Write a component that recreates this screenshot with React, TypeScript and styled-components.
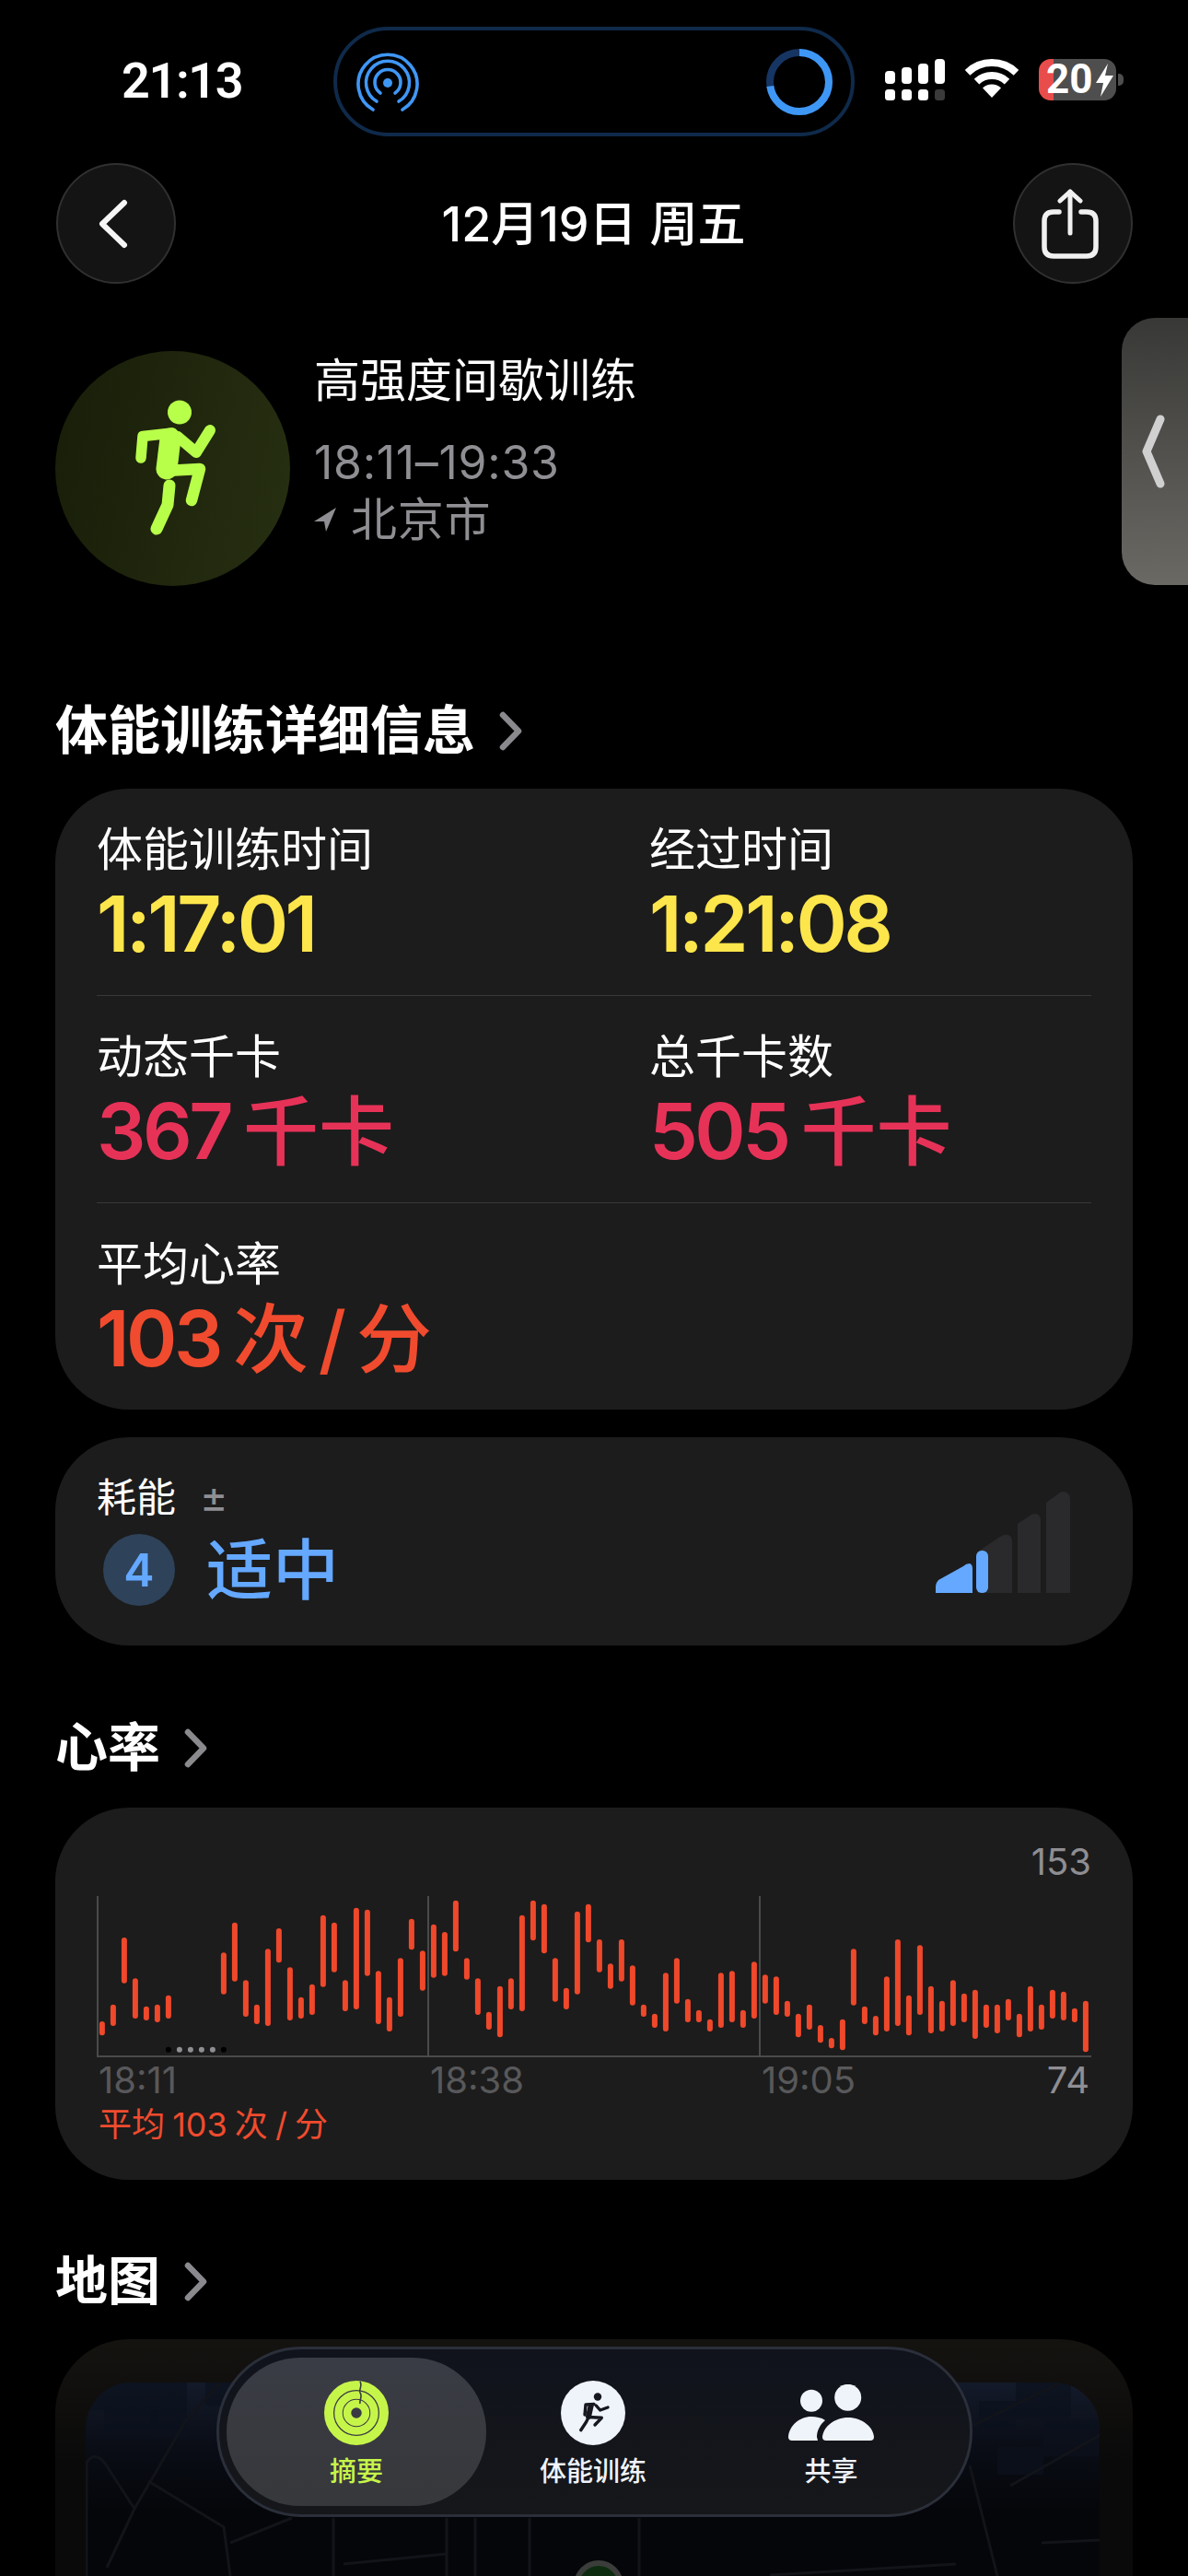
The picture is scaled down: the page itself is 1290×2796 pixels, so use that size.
import styled, { createGlobalStyle } from 'styled-components';

const FONT = '"Inter", "Noto Sans CJK SC", sans-serif';

// [top, bottom] of each heart rate bar, in chart pixels
const HEART_BARS: [number, number][] = [
  [582, 628], [527, 597], [309, 458], [442, 573], [533, 579], [527, 585], [497, 573], [0, 0], [0, 0], [0, 0], [0, 0],
  [358, 494], [260, 452], [448, 567], [527, 591], [346, 597], [279, 391], [406, 579], [503, 573], [461, 561],
  [236, 470], [260, 422], [448, 549], [212, 543], [218, 434], [418, 591], [503, 615], [376, 567], [248, 349],
  [352, 482], [266, 440], [291, 434], [188, 355], [376, 446], [442, 561], [551, 609], [467, 634], [442, 543],
  [236, 549], [188, 319], [200, 361], [376, 518], [473, 543], [224, 494], [200, 325], [315, 422], [394, 476],
  [315, 452], [400, 530], [527, 567], [557, 603], [424, 615], [376, 524], [509, 585], [545, 585], [575, 615],
  [424, 603], [418, 585], [545, 603], [388, 573], [430, 524], [436, 561], [515, 567], [557, 634], [527, 609],
  [594, 652], [636, 670], [575, 676], [346, 530], [533, 591], [564, 628], [436, 615], [315, 597], [497, 628],
  [334, 561], [467, 621], [515, 615], [448, 597], [491, 585], [479, 639], [527, 603], [527, 621], [509, 579],
  [557, 634], [467, 615], [527, 609], [479, 573], [485, 579], [539, 585], [515, 682],
];

const GlobalStyle = createGlobalStyle`
  html, body {
    margin: 0;
    background: #000;
  }
`;

const Page = styled.div`
  position: relative;
  width: 1290px;
  height: 2796px;
  overflow: hidden;
  background: #000;
  color: #fff;
  font-family: ${FONT};
`;

const StatusBar = styled.div`
  display: flex;
  height: 177px;
  box-sizing: border-box;
  padding: 29px 70px 0 132px;
  align-items: flex-start;
`;

const Clock = styled.div`
  width: 230px;
  height: 119px;
  font-family: "Roboto", sans-serif;
  font-size: 54px;
  font-weight: 600;
  line-height: 119px;
  letter-spacing: -1.4px;
  margin-top: -1px;
`;

const Island = styled.div`
  display: flex;
  width: 566px;
  height: 119px;
  box-sizing: border-box;
  padding: 0 20px 0 21px;
  align-items: center;
  justify-content: space-between;
  border: 4px solid #0f2a4a;
  border-radius: 60px;
`;

const StatusIcons = styled.div`
  display: flex;
  margin: 35px 0 0 33px;
  gap: 22px;
  align-items: flex-start;
`;

const Battery = styled.div`
  position: relative;
  display: flex;
  width: 84px;
  height: 45px;
  box-sizing: border-box;
  padding-left: 8px;
  align-items: center;
  gap: 3px;
  border-radius: 13px;
  background: linear-gradient(90deg, #e84d4b 16px, #4e4e4e 16px);
  font-family: "Roboto", sans-serif;
  font-size: 44px;
  font-weight: 700;
  line-height: 45px;

  &::after {
    content: '';
    position: absolute;
    right: -8px;
    top: 16px;
    width: 6px;
    height: 13px;
    border-radius: 0 5px 5px 0;
    background: #4e4e4e;
  }
`;

const NavBar = styled.div`
  position: relative;
  display: flex;
  padding: 0 60px 0 61px;
  align-items: center;
  justify-content: space-between;
`;

const RoundButton = styled.button`
  display: flex;
  width: 130px;
  height: 131px;
  padding: 0 6px 0 0;
  align-items: center;
  justify-content: center;
  border: 2px solid #303030;
  border-radius: 50%;
  background: #141414;
`;

const NavTitle = styled.div`
  padding-top: 3px;
  font-size: 52px;
  font-weight: 500;
  line-height: 60px;
  margin-right: 2px;
`;

const Hero = styled.div`
  display: flex;
  margin: 73px 0 0 60px;
  gap: 26px;
`;

const HeroBadge = styled.div`
  display: flex;
  width: 255px;
  height: 255px;
  align-items: center;
  justify-content: center;
  border-radius: 50%;
  background: linear-gradient(100deg, #181e08, #272f12);
`;

const HeroText = styled.div`
  padding-top: 2px;
`;

const HeroTitle = styled.div`
  margin-bottom: 28px;
  font-size: 50px;
  line-height: 60px;
`;

const HeroMeta = styled.div`
  display: flex;
  height: 62px;
  gap: 16px;
  align-items: center;
  color: #8e8e93;
  font-size: 50px;
  letter-spacing: 0.7px;
  line-height: 62px;
`;

const SectionTitle = styled.div<{ $top: number; $bottom?: number }>`
  display: flex;
  height: 72px;
  margin: ${(p) => p.$top}px 0 ${(p) => p.$bottom ?? 28}px 60px;
  gap: 26px;
  align-items: center;
  font-size: 57px;
  font-weight: 700;
  line-height: 72px;
`;

const Card = styled.div`
  margin: 0 60px;
  padding: 0 45px;
  border-radius: 80px;
  background: #1c1c1c;
`;

const MetricRow = styled.div<{ $divided?: boolean }>`
  display: grid;
  grid-template-columns: 600px 1fr;
  box-sizing: border-box;
  height: ${(p) => (p.$divided ? 225 : 224)}px;
  padding-top: 36px;
  border-bottom: ${(p) => (p.$divided ? '1px solid #38383a' : 'none')};
`;

const MetricLabel = styled.div`
  font-size: 50px;
  line-height: 60px;
  margin-bottom: 6px;
`;

const MetricValue = styled.div<{ $color: string }>`
  color: ${(p) => p.$color};
  font-size: 84px;
  font-weight: 560;
  line-height: 90px;
  letter-spacing: -3.5px;
  white-space: nowrap;
`;

const Unit = styled.span`
  margin-left: 14px;
  font-size: 82px;
  font-weight: 500;
  letter-spacing: 0;
  word-spacing: -11px;
`;

const EffortCard = styled(Card)`
  position: relative;
  height: 226px;
  margin-top: 30px;
  box-sizing: border-box;
  padding-top: 39px;
  display: flex;
  justify-content: space-between;
`;

const EffortLabel = styled.div`
  display: flex;
  gap: 26px;
  align-items: center;
  font-size: 43px;
  line-height: 52px;
`;

const PlusMinus = styled.span`
  margin-top: -2px;
  color: #8e8e93;
  font-size: 46px;
`;

const EffortRow = styled.div`
  display: flex;
  margin: 14px 0 0 7px;
  gap: 34px;
  align-items: center;
`;

const EffortBadge = styled.div`
  display: flex;
  width: 78px;
  height: 78px;
  align-items: center;
  justify-content: center;
  border-radius: 50%;
  background: #2e4259;
  color: #64a8ff;
  font-size: 50px;
  font-weight: 600;
`;

const EffortText = styled.div`
  color: #64a8ff;
  font-size: 72px;
  font-weight: 500;
  line-height: 78px;
`;

const EffortBars = styled.div`
  margin: 19px 23px 0 0;
`;

const HeartCard = styled(Card)`
  padding-top: 34px;
  padding-bottom: 38px;
`;

const ChartMax = styled.div`
  color: #8e8e93;
  font-size: 40px;
  line-height: 50px;
  text-align: right;
`;

const Chart = styled.svg`
  display: block;
  width: 1080px;
  height: 190px;
`;

const AxisRow = styled.div`
  display: grid;
  grid-template-columns: 360px 360px 1fr auto;
  padding: 0 2px;
  line-height: 44px;
  font-size: 40px;
  color: #58585a;
`;

const AxisMin = styled.span`
  color: #8e8e93;
`;

const AverageText = styled.div`
  margin: 4px 0 0 2px;
  color: #f04b2e;
  font-size: 36px;
  line-height: 44px;
  word-spacing: -2px;
`;

const MapCard = styled(Card)`
  height: 400px;
  padding: 47px 36px 0 33px;
  background: linear-gradient(180deg, #151310, #0a0a0a 30%);
`;

const MapView = styled.div`
  height: 400px;
  overflow: hidden;
  border-radius: 50px 50px 0 0;
  background: linear-gradient(180deg, #131a29 0, #0a0d16 70px, #05060a 140px);
`;

const SideHandle = styled.div`
  position: absolute;
  top: 345px;
  right: 0;
  display: flex;
  width: 72px;
  height: 290px;
  box-sizing: border-box;
  padding-left: 21px;
  align-items: center;
  border-radius: 36px 0 0 36px;
  background: linear-gradient(180deg, #383836, #6b6964);
`;

const TabBar = styled.div`
  position: absolute;
  top: 2547px;
  left: 235px;
  display: grid;
  grid-template-columns: 282px 232px 1fr;
  width: 821px;
  height: 185px;
  box-sizing: border-box;
  padding: 9px 8px;
  border: 3px solid #2a2f3a;
  border-radius: 92px;
  background: linear-gradient(180deg, #10131c, #16171a);
`;

const Tab = styled.div<{ $active?: boolean }>`
  display: flex;
  padding-top: 25px;
  flex-direction: column;
  align-items: center;
  gap: 11px;
  border-radius: 80px;
  background: ${(p) => (p.$active ? 'linear-gradient(180deg, #3a3c45, #37383b)' : 'transparent')};
  color: ${(p) => (p.$active ? '#c6f54a' : '#eff3fa')};
  font-size: 29px;
  font-weight: 500;
  line-height: 36px;
`;

const TabIcon = styled.svg`
  display: block;
  width: 70px;
  height: 70px;
`;

const PeopleGlyph = styled.svg`
  display: block;
  width: 93px;
  height: 62px;
  margin: 4px 0;
`;

function ChevronRight() {
  return (
    <svg width="25" height="43" viewBox="0 0 25 43" fill="none" stroke="#8a8a8e" strokeWidth="6.5" strokeLinecap="round" strokeLinejoin="round">
      <path d="M4 4 L21 21.5 L4 39" />
    </svg>
  );
}

function Arcs() {
  const arc = (dx: number, dy: number, r: number) => `M${34 - dx} ${35 + dy} A${r} ${r} 0 1 1 ${34 + dx} ${35 + dy}`;
  return (
    <svg width="68" height="68" viewBox="0 0 68 68" fill="none" stroke="#3f97f5" strokeWidth="3.6" strokeLinecap="round">
      <path d={arc(16, 29, 32)} />
      <path d={arc(12, 20, 23.5)} />
      <path d={arc(8, 11, 14)} />
      <circle cx="34" cy="35" r="5" fill="#3f97f5" stroke="none" />
    </svg>
  );
}

function ProgressRing() {
  return (
    <svg width="72" height="72" viewBox="0 0 72 72" fill="none" strokeWidth="8" style={{ transform: 'rotate(-90deg)' }}>
      <circle cx="36" cy="36" r="32" stroke="#163563" />
      <circle cx="36" cy="36" r="32" stroke="#3f97f5" strokeDasharray="146 201" />
    </svg>
  );
}

function SignalBars() {
  const tops = [13, 9, 5, 0];
  return (
    <svg width="65" height="45" viewBox="0 0 65 45" fill="#fff">
      {tops.map((t, i) => (
        <rect key={`t${t}`} x={i * 18} y={t} width="11" height={27 - t} rx="4" />
      ))}
      {tops.map((t, i) => (
        <rect key={`b${t}`} x={i * 18} y="33" width="11" height="12" rx="3.5" fill={i === 3 ? '#3a3a3a' : '#fff'} />
      ))}
    </svg>
  );
}

function Wifi() {
  return (
    <svg width="58" height="42" viewBox="0 0 58 42" fill="none" stroke="#fff" strokeWidth="8">
      <path d="M2.5 14.8 A38 38 0 0 1 55.5 14.8" />
      <path d="M12.5 24.6 A24 24 0 0 1 45.5 24.6" />
      <path d="M29 42 L19 31.5 A14.5 14.5 0 0 1 39 31.5 Z" fill="#fff" stroke="none" />
    </svg>
  );
}

function Bolt() {
  return (
    <svg width="19" height="36" viewBox="0 0 19 36" fill="#fff">
      <path d="M13 0 L0 21 H8 L5 36 L19 13 H10 Z" />
    </svg>
  );
}

function HeroRunner() {
  return (
    <svg width="255" height="255" viewBox="0 0 255 255" fill="none" stroke="#b8ff4a" strokeLinecap="round" strokeLinejoin="round">
      <circle cx="135" cy="66.5" r="13" fill="#b8ff4a" stroke="none" />
      <path d="M93 116 L95 92.5 L127 89" strokeWidth="11.5" />
      <path d="M125 95 L121 128" strokeWidth="23" />
      <path d="M133 93 L153 110 L168 86" strokeWidth="12" />
      <path d="M120 130 L157 128 L148 162" strokeWidth="12.5" />
      <path d="M124 146 L122 167 L110 193" strokeWidth="13" />
    </svg>
  );
}

function TabRunner() {
  return (
    <TabIcon viewBox="0 0 70 70" fill="none" stroke="#17181f" strokeWidth="3.4" strokeLinecap="round" strokeLinejoin="round">
      <circle cx="35" cy="35" r="35" fill="#eff3fa" stroke="none" />
      <circle cx="40" cy="17.5" r="4.2" fill="#17181f" stroke="none" />
      <path d="M32.7 27 L30 39" strokeWidth="6" />
      <path d="M26 37 L27 26 L36 25.5" />
      <path d="M38.3 27 L42.7 32 L51 29" />
      <path d="M30 39.5 L44.3 40.3 L37 48" />
      <path d="M29 42 L27.3 45.3 L21.7 53.7" />
    </TabIcon>
  );
}

function RingsIcon() {
  return (
    <TabIcon viewBox="0 0 70 70" fill="none">
      <circle cx="35" cy="35" r="30" stroke="#c6f54a" strokeWidth="10" />
      <circle cx="35" cy="35" r="19.5" stroke="#c6f54a" strokeWidth="8.5" />
      <circle cx="35" cy="35" r="10" stroke="#c6f54a" strokeWidth="8.5" />
      <path d="M39 1 C42 6 37 10 39 13 C42 17 38 21 39 25" stroke="#383a40" strokeWidth="1.6" />
    </TabIcon>
  );
}

function PeopleIcon() {
  return (
    <PeopleGlyph viewBox="0 0 93 62" fill="#eff3fa">
      <circle cx="25" cy="17.7" r="12" />
      <circle cx="64.7" cy="14.3" r="14.5" />
      <path d="M41 61 Q37 61 37 57 C38 46 50 36 65 36 C80 36 92 46 93 57 Q93 61 89 61 Z" />
      <path d="M4 61 Q0 61 0 57 C1 45 12 35 25 35 C30 35 36 36 40 39 C35 43 31 50 31 57 L32 61 Z" />
    </PeopleGlyph>
  );
}

function MapDrawing() {
  const roads = [
    'M1 210 L1 87 Q12 70 27 97 L53 137 L23 201',
    'M53 137 L109 41 L146 1',
    'M68 107 L150 157 L157 210',
    'M157 174 L224 147',
    'M963 47 L1057 1',
    'M1004 112 L1101 57',
    'M960 90 L990 210',
    'M743 209 L945 197',
    'M1038 174 L1101 171',
    'M280 197 L392 186',
    'M269 147 V210 M392 147 V210 M423 147 V210 M482 147 V210 M601 147 V210',
  ];
  const blocks = [
    [0, 0, 70, 30], [70, 0, 40, 60], [20, 30, 60, 25], [1010, 0, 60, 40], [1040, 40, 60, 40], [970, 20, 40, 30],
    [130, 0, 40, 25], [990, 70, 50, 30],
  ];
  return (
    <svg width="1101" height="400" viewBox="0 0 1101 400" fill="none">
      {blocks.map(([x, y, w, h]) => (
        <rect key={`${x}-${y}`} x={x} y={y} width={w} height={h} fill="#0c111d" opacity="0.7" />
      ))}
      {roads.map((d) => (
        <path key={d} d={d} stroke="#12141a" strokeWidth="3" />
      ))}
      <circle cx="557" cy="220" r="24" fill="#0d2c0f" stroke="#3a3d3a" strokeWidth="6" />
    </svg>
  );
}

export default function App() {
  return (
    <Page>
      <GlobalStyle />
      <StatusBar>
        <Clock>21:13</Clock>
        <Island>
          <Arcs />
          <ProgressRing />
        </Island>
        <StatusIcons>
          <SignalBars />
          <Wifi />
          <Battery>
            20
            <Bolt />
          </Battery>
        </StatusIcons>
      </StatusBar>

      <NavBar>
        <RoundButton aria-label="返回">
          <svg width="32" height="54" viewBox="0 0 32 54" fill="none" stroke="#f5f5f5" strokeWidth="6" strokeLinecap="round" strokeLinejoin="round">
            <path d="M28 4 L4 27 L28 50" />
          </svg>
        </RoundButton>
        <NavTitle>12月19日 周五</NavTitle>
        <RoundButton aria-label="分享">
          <svg width="62" height="76" viewBox="0 0 62 76" fill="none" stroke="#f0f0f0" strokeWidth="5" strokeLinecap="round" strokeLinejoin="round">
            <path d="M31 3 V48" />
            <path d="M20 13 L31 3 L42 13" />
            <path d="M19 25 H13 Q3 25 3 35 V63 Q3 73 13 73 H49 Q59 73 59 63 V35 Q59 25 49 25 H43" strokeWidth="5.5" />
          </svg>
        </RoundButton>
      </NavBar>

      <Hero>
        <HeroBadge>
          <HeroRunner />
        </HeroBadge>
        <HeroText>
          <HeroTitle>高强度间歇训练</HeroTitle>
          <HeroMeta>18:11–19:33</HeroMeta>
          <HeroMeta>
            <svg width="24" height="26" viewBox="0 0 24 26" fill="#8e8e93">
              <path d="M24 0 L0 15 L11 15 L13 26 Z" />
            </svg>
            北京市
          </HeroMeta>
        </HeroText>
      </Hero>

      <SectionTitle $top={121} $bottom={27}>
        体能训练详细信息
        <ChevronRight />
      </SectionTitle>
      <Card>
        <MetricRow $divided>
          <div>
            <MetricLabel>体能训练时间</MetricLabel>
            <MetricValue $color="#fde64b">1:17:01</MetricValue>
          </div>
          <div>
            <MetricLabel>经过时间</MetricLabel>
            <MetricValue $color="#fde64b">1:21:08</MetricValue>
          </div>
        </MetricRow>
        <MetricRow $divided>
          <div>
            <MetricLabel>动态千卡</MetricLabel>
            <MetricValue $color="#e73258">
              367
              <Unit>千卡</Unit>
            </MetricValue>
          </div>
          <div>
            <MetricLabel>总千卡数</MetricLabel>
            <MetricValue $color="#e73258">
              505
              <Unit>千卡</Unit>
            </MetricValue>
          </div>
        </MetricRow>
        <MetricRow>
          <div>
            <MetricLabel>平均心率</MetricLabel>
            <MetricValue $color="#f04b2e">
              103
              <Unit>次 / 分</Unit>
            </MetricValue>
          </div>
        </MetricRow>
      </Card>

      <EffortCard>
        <div>
          <EffortLabel>
            耗能
            <PlusMinus>±</PlusMinus>
          </EffortLabel>
          <EffortRow>
            <EffortBadge>4</EffortBadge>
            <EffortText>适中</EffortText>
          </EffortRow>
        </div>
        <EffortBars>
          <svg width="146" height="111" viewBox="0 0 146 111">
            <g fill="#2a2a2c">
              <path d="M46 111 V66 L70 50 Q75 47 79 48 Q83 50 83 55 V111 Z" />
              <path d="M89 111 V36 L104 26 Q108 24 111 26 Q114 28 114 32 V111 Z" />
              <path d="M120 111 V13 L135 2 Q139 0 142 2 Q146 4 146 9 V111 Z" />
            </g>
            <g fill="#64a8ff">
              <path d="M0 111 V104 Q0 100 3 97 L30 82 Q33 79 37 79 Q40 80 40 85 V111 Z" />
              <rect x="44" y="65" width="13" height="46" rx="6" />
            </g>
          </svg>
        </EffortBars>
      </EffortCard>

      <SectionTitle $top={75} $bottom={29}>
        心率
        <ChevronRight />
      </SectionTitle>
      <HeartCard>
        <ChartMax>153</ChartMax>
        <Chart viewBox="0 0 1080 190" fill="none">
          <path d="M1 12 V186 H1080 M360 12 V186 M720 12 V186" stroke="#4a4a4a" strokeWidth="2" />
          {[6, 7, 8, 9, 10, 11].map((i) => (
            <circle key={i} cx={5.9 + 12 * i} cy="178.7" r="3" fill={i === 6 || i === 11 ? '#000' : '#8e8e93'} />
          ))}
          {HEART_BARS.map(([top, bottom], i) => (
            bottom > 0 && (
              <rect
                key={`${i}-${top}`}
                x={2.9 + 12 * i}
                y={top / 3 - 46}
                width="6"
                height={(bottom - top) / 3}
                rx="3"
                fill="#ef482b"
              />
            )
          ))}
        </Chart>
        <AxisRow>
          <span>18:11</span>
          <span>18:38</span>
          <span>19:05</span>
          <AxisMin>74</AxisMin>
        </AxisRow>
        <AverageText>平均 103 次 / 分</AverageText>
      </HeartCard>

      <SectionTitle $top={74} $bottom={27}>
        地图
        <ChevronRight />
      </SectionTitle>
      <MapCard>
        <MapView>
          <MapDrawing />
        </MapView>
      </MapCard>

      <SideHandle>
        <svg width="26" height="80" viewBox="0 0 26 80" fill="none" stroke="#d0d0d0" strokeWidth="9" strokeLinecap="round" strokeLinejoin="round">
          <path d="M21 5 L6 40 L21 75" />
        </svg>
      </SideHandle>

      <TabBar>
        <Tab $active>
          <RingsIcon />
          摘要
        </Tab>
        <Tab>
          <TabRunner />
          体能训练
        </Tab>
        <Tab>
          <PeopleIcon />
          共享
        </Tab>
      </TabBar>
    </Page>
  );
}
